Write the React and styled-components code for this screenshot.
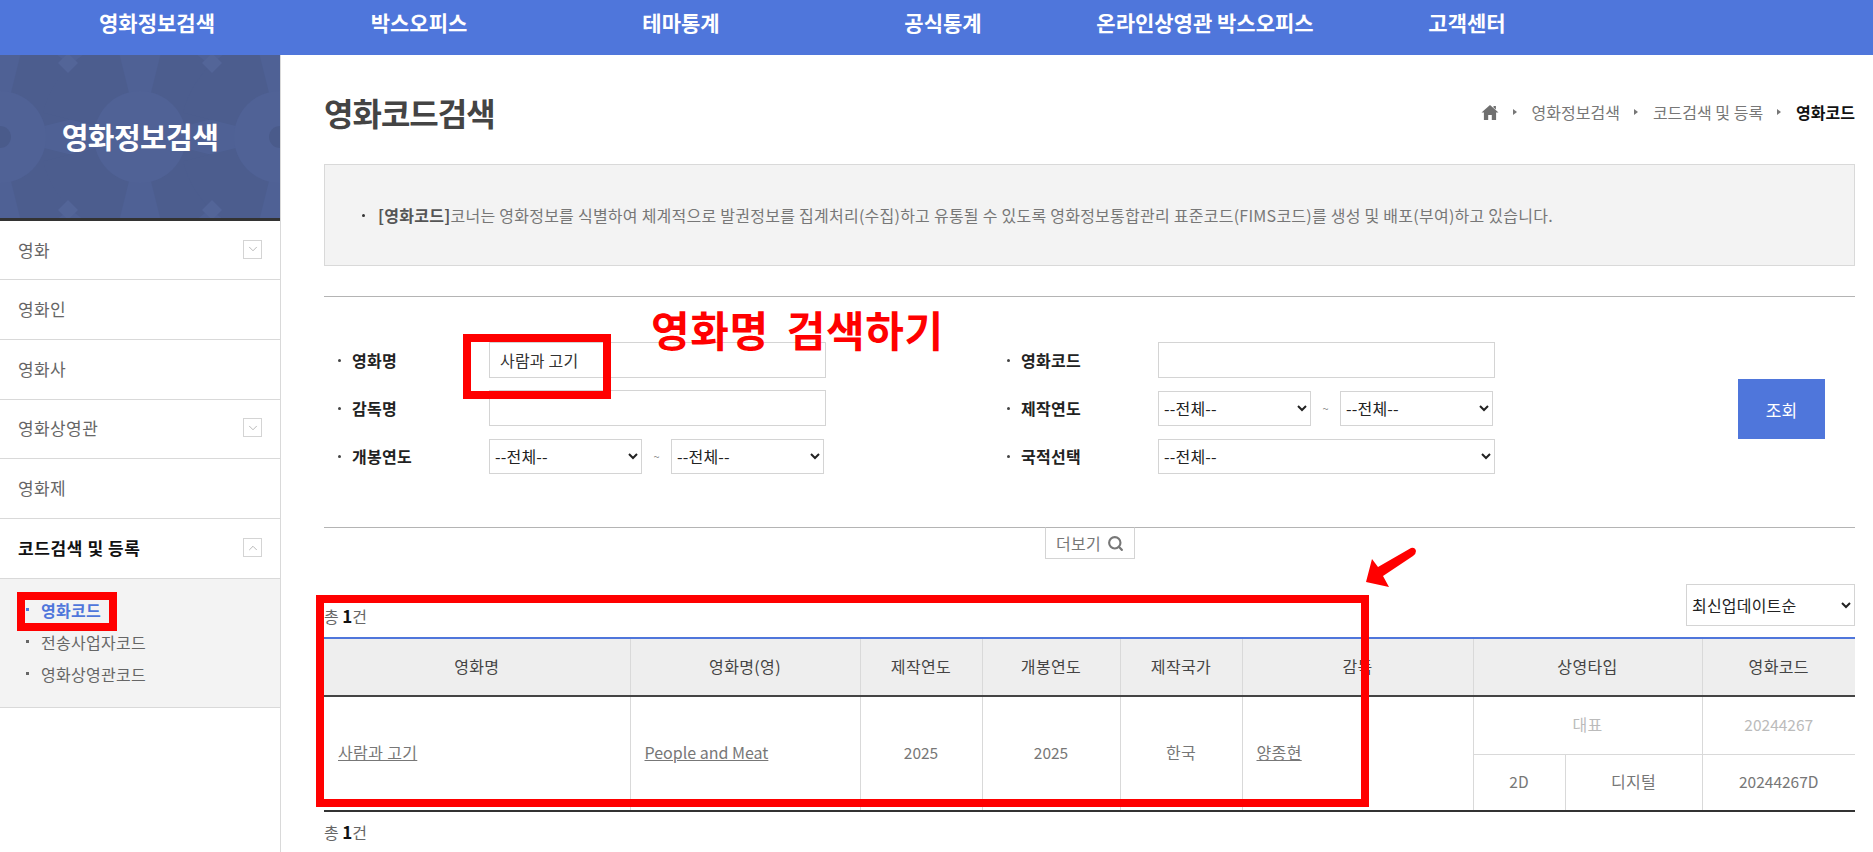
import React from "react";
import styled, { createGlobalStyle } from "styled-components";
import { Search, ChevronDown, ChevronUp } from "lucide-react";

const KR = `"Noto Sans CJK KR", "Noto Sans", sans-serif`;

const Global = createGlobalStyle`
  html, body { margin: 0; padding: 0; background: #fff; }
  body { font-family: ${KR}; color: #555; overflow: hidden; }
  * { box-sizing: border-box; }
`;

const Page = styled.div`
  width: 1873px;
  height: 852px;
  overflow: hidden;
  position: relative;
`;

const TopNav = styled.nav`
  height: 55px;
  background: #4f76db;
  display: flex;
  padding-left: 26px;
`;
const NavItem = styled.a`
  width: 262px;
  height: 45px;
  line-height: 45px;
  text-align: center;
  color: #fff;
  font-size: 21px;
  font-weight: 700;
  white-space: nowrap;
`;

const Body = styled.div`
  display: flex;
  height: 797px;
`;
const Side = styled.aside`
  width: 281px;
  flex: none;
  border-right: 1px solid #d9d9d9;
`;
const Hero = styled.div`
  height: 166px;
  position: relative;
  background: #4f6195;
  border-bottom: 3px solid #333;
  display: flex;
  align-items: center;
  justify-content: center;
  overflow: hidden;
`;
const HeroArt = styled.svg`
  position: absolute;
  inset: 0;
  width: 280px;
  height: 163px;
`;
const HeroTitle = styled.h2`
  position: relative;
  margin: -2px 0 0;
  color: #fff;
  font-size: 29px;
  font-weight: 700;
  letter-spacing: -0.6px;
`;
const MenuRow = styled.div`
  height: ${(p) => p.$h || 59.8}px;
  display: flex;
  align-items: center;
  justify-content: space-between;
  padding: 0 18px 2px;
  border-bottom: 1px solid #d9d9d9;
  color: ${(p) => (p.$on ? "#111" : "#666")};
  font-size: 17px;
  letter-spacing: ${(p) => (p.$on ? 0.6 : 0.4)}px;
  font-weight: ${(p) => (p.$on ? 700 : 400)};
`;
const Toggle = styled.span`
  width: 19px;
  height: 19px;
  border: 1px solid #d4d4d4;
  display: flex;
  align-items: center;
  justify-content: center;
  color: #888;
`;
const SubMenu = styled.ul`
  list-style: none;
  margin: 0;
  padding: 15px 0 0 26px;
  height: 129px;
  background: #f3f3f3;
  border-bottom: 1px solid #d9d9d9;
`;
const SubItem = styled.li`
  height: 32px;
  display: flex;
  align-items: center;
  gap: 12px;
  font-size: 16px;
  letter-spacing: 0.3px;
  color: ${(p) => (p.$on ? "#4f76db" : "#666")};
  font-weight: ${(p) => (p.$on ? 700 : 400)};
  &::before {
    content: "";
    width: 3px;
    height: 3px;
    background: ${(p) => (p.$on ? "#4f76db" : "#666")};
  }
`;

const Main = styled.main`
  width: 1531px;
  margin-left: 43px;
  flex: none;
`;
const TitleRow = styled.div`
  height: 109px;
  display: flex;
  justify-content: space-between;
  align-items: flex-start;
`;
const Title = styled.h1`
  margin: 32px 0 0;
  color: #444;
  font-size: 32px;
  line-height: 50px;
  font-weight: 700;
  letter-spacing: -1px;
`;
const Crumbs = styled.div`
  display: flex;
  align-items: center;
  margin-top: 45px;
  height: 24px;
  font-size: 16px;
  color: #777;
`;
const Crumb = styled.span`
  color: ${(p) => (p.$last ? "#111" : "#777")};
  font-weight: ${(p) => (p.$last ? 700 : 400)};
`;
const CrumbArrow = styled.i`
  width: 0;
  height: 0;
  margin: 0 15px 0 14px;
  border-left: 4px solid #777;
  border-top: 3px solid transparent;
  border-bottom: 3px solid transparent;
`;
const Notice = styled.div`
  height: 102px;
  background: #f3f3f3;
  border: 1px solid #d9d9d9;
  display: flex;
  align-items: center;
  padding-left: 37px;
  font-size: 16px;
  letter-spacing: 0.25px;
  color: #777;
  &::before {
    content: "";
    width: 3px;
    height: 3px;
    border-radius: 50%;
    background: #333;
    margin-right: 13px;
  }
  b { color: #555; font-weight: 700; }
`;
const Filter = styled.form`
  margin-top: 30px;
  height: 232px;
  border-top: 1px solid #b4b4b4;
  border-bottom: 1px solid #b4b4b4;
  padding: 45px 30px 0 14px;
  display: flex;
`;
const FilterCol = styled.div`
  width: ${(p) => p.$w}px;
  flex: none;
  display: flex;
  flex-direction: column;
  gap: 12px;
`;
const Field = styled.div`
  height: 36px;
  display: flex;
  align-items: center;
`;
const Label = styled.label`
  width: 151px;
  flex: none;
  display: flex;
  align-items: center;
  gap: 11px;
  font-size: 16px;
  letter-spacing: 0.3px;
  font-weight: 700;
  color: #222;
  &::before {
    content: "";
    width: 3px;
    height: 3px;
    border-radius: 50%;
    background: #444;
  }
`;
const TextInput = styled.input`
  width: 337px;
  height: 36px;
  border: 1px solid #d4d4d4;
  padding: 0 10px;
  font: 400 16px ${KR};
  letter-spacing: 0.2px;
  color: #333;
  outline: none;
  background: #fff;
`;
const Select = styled.select`
  width: ${(p) => p.$w || 153}px;
  height: ${(p) => p.$h || 35}px;
  border: 1px solid #d4d4d4;
  background: #fff;
  font: 400 16px ${KR};
  letter-spacing: 0.2px;
  color: #222;
  padding: 0 1px;
  border-radius: 0;
`;
const Tilde = styled.span`
  width: 29px;
  text-align: center;
  font-size: 11px;
  color: #888;
`;
const SubmitSlot = styled.div`
  flex: 1;
  display: flex;
  justify-content: flex-end;
  padding-top: 37px;
`;
const SubmitBtn = styled.button`
  width: 87px;
  height: 60px;
  background: #4f76db;
  color: #fff;
  border: 0;
  font: 400 17px ${KR};
`;
const MoreWrap = styled.div`
  display: flex;
  margin-left: 721px;
  height: 56px;
  align-items: flex-start;
`;
const MoreBtn = styled.button`
  width: 90px;
  height: 32px;
  margin-top: -1px;
  border: 1px solid #d4d4d4;
  border-top-color: #b4b4b4;
  background: #fff;
  display: flex;
  align-items: center;
  justify-content: center;
  gap: 6px;
  font: 400 16px ${KR};
  letter-spacing: 0.2px;
  color: #777;
`;
const TableTop = styled.div`
  height: 53px;
  display: flex;
  justify-content: space-between;
  align-items: flex-start;
`;
const Count = styled.div`
  font-size: 16px;
  color: #666;
  line-height: 22px;
  margin-top: ${(p) => p.$mt || 0}px;
  b { color: #111; font-weight: 700; font-size: 17px; }
`;
const Table = styled.table`
  width: 1531px;
  border-collapse: collapse;
  table-layout: fixed;
  border-top: 2px solid #4f76db;
  border-bottom: 2px solid #333;
  font-size: 16px;
  letter-spacing: 0.35px;
  color: #777;
`;
const Th = styled.th`
  height: 58px;
  padding: 0 0 2px;
  background: #eee;
  border-left: 1px solid #d9d9d9;
  border-bottom: 2px solid #444;
  font-weight: 400;
  color: #444;
  &:first-child { border-left: 0; }
`;
const Td = styled.td`
  height: ${(p) => p.$h || 58}px;
  border-left: ${(p) => (p.$first ? "0" : "1px solid #d9d9d9")};
  border-bottom: 1px solid #d9d9d9;
  text-align: ${(p) => (p.$left ? "left" : "center")};
  padding: 0 ${(p) => (p.$left ? 14 : 0)}px ${(p) => (p.rowSpan > 1 ? 4 : 2)}px;
  color: ${(p) => (p.$dim ? "#bbb" : "#777")};
  font-size: ${(p) => (p.$num ? 15.5 : 16)}px;
  letter-spacing: ${(p) => (p.$num ? 0 : 0.35)}px;
  a { color: #777; text-decoration: underline; }
`;
const EnglishLink = styled.a`
  font-size: 16px;
`;
const Annotations = styled.div`
  position: absolute;
  inset: 0;
  pointer-events: none;
`;
const RedBox = styled.div`
  position: absolute;
  left: ${(p) => p.$x}px;
  top: ${(p) => p.$y}px;
  width: ${(p) => p.$w}px;
  height: ${(p) => p.$h}px;
  border: 8px solid #f00;
`;
const RedCaption = styled.div`
  position: absolute;
  left: 651px;
  top: 301px;
  color: #f00;
  font-size: 42px;
  line-height: 56px;
  font-weight: 700;
  white-space: nowrap;
  letter-spacing: 0.6px;
  word-spacing: 8px;
`;
const ArrowArt = styled.svg`
  position: absolute;
  left: 1360px;
  top: 545px;
  width: 60px;
  height: 48px;
`;

const menu = ["영화", "영화인", "영화사", "영화상영관", "영화제"];
const withToggle = { 영화: 1, 영화상영관: 1 };
const navs = ["영화정보검색", "박스오피스", "테마통계", "공식통계", "온라인상영관 박스오피스", "고객센터"];

const sector = (cx, cy, r, mid, half) => {
  const rad = (d) => ((d - 90) * Math.PI) / 180;
  const p = (d) => `${cx + r * Math.cos(rad(d))} ${cy + r * Math.sin(rad(d))}`;
  return `M${cx} ${cy} L${p(mid - half)} A${r} ${r} 0 0 1 ${p(mid + half)} Z`;
};

const HeroPattern = () => {
  const centers = [0, 140, 280];
  const diamonds = [[68, 8], [212, 8], [68, 155], [212, 155]];
  return (
    <HeroArt viewBox="0 0 280 163">
      {centers.map((cx) =>
        [45, 135, 225, 315].map((a) => (
          <path key={cx + "-" + a} d={sector(cx, 82, 100, a, 31)} fill="#4c5d8e" />
        ))
      )}
      {diamonds.map(([x, y]) => (
        <path key={x + "-" + y} d={`M${x} ${y - 10} L${x + 10} ${y} L${x} ${y + 10} L${x - 10} ${y} Z`} fill="#536598" />
      ))}
      {centers.map((cx) => (
        <circle key={cx} cx={cx} cy="82" r="46" fill="#506296" />
      ))}
      <circle cx="0" cy="82" r="11" fill="#4a5b8b" />
      <circle cx="280" cy="82" r="11" fill="#4a5b8b" />
    </HeroArt>
  );
};

const Home = () => (
  <svg width="18" height="15" viewBox="0 0 17 15">
    <path d="M8.5 0 L17 7.6 H14.6 V15 H10.3 V10 H6.7 V15 H2.4 V7.6 H0 Z M12 1 H14.4 V4.4 L12 2.4 Z" fill="#6f6f6f" />
  </svg>
);

export default function App() {
  return (
    <Page>
      <Global />
      <TopNav>
        {navs.map((n) => (
          <NavItem key={n}>{n}</NavItem>
        ))}
      </TopNav>
      <Body>
        <Side>
          <Hero>
            <HeroPattern />
            <HeroTitle>영화정보검색</HeroTitle>
          </Hero>
          {menu.map((m, i) => (
            <MenuRow key={m} $h={i === 0 ? 59 : undefined}>
              {m}
              {withToggle[m] && (
                <Toggle>
                  <ChevronDown size={14} strokeWidth={1} />
                </Toggle>
              )}
            </MenuRow>
          ))}
          <MenuRow $on>
            코드검색 및 등록
            <Toggle>
              <ChevronUp size={14} strokeWidth={1} />
            </Toggle>
          </MenuRow>
          <SubMenu>
            <SubItem $on>영화코드</SubItem>
            <SubItem>전송사업자코드</SubItem>
            <SubItem>영화상영관코드</SubItem>
          </SubMenu>
        </Side>
        <Main>
          <TitleRow>
            <Title>영화코드검색</Title>
            <Crumbs>
              <Home />
              <CrumbArrow />
              <Crumb>영화정보검색</Crumb>
              <CrumbArrow />
              <Crumb>코드검색 및 등록</Crumb>
              <CrumbArrow />
              <Crumb $last>영화코드</Crumb>
            </Crumbs>
          </TitleRow>
          <Notice>
            <span>
              <b>[영화코드]</b>코너는 영화정보를 식별하여 체계적으로 발권정보를 집계처리(수집)하고 유통될 수 있도록 영화정보통합관리 표준코드(FIMS코드)를 생성 및 배포(부여)하고 있습니다.
            </span>
          </Notice>
          <Filter>
            <FilterCol $w={669}>
              <Field>
                <Label>영화명</Label>
                <TextInput defaultValue="사람과 고기" />
              </Field>
              <Field>
                <Label>감독명</Label>
                <TextInput />
              </Field>
              <Field>
                <Label>개봉연도</Label>
                <Select><option>--전체--</option></Select>
                <Tilde>~</Tilde>
                <Select><option>--전체--</option></Select>
              </Field>
            </FilterCol>
            <FilterCol $w={500}>
              <Field>
                <Label>영화코드</Label>
                <TextInput />
              </Field>
              <Field>
                <Label>제작연도</Label>
                <Select><option>--전체--</option></Select>
                <Tilde>~</Tilde>
                <Select><option>--전체--</option></Select>
              </Field>
              <Field>
                <Label>국적선택</Label>
                <Select $w={337}><option>--전체--</option></Select>
              </Field>
            </FilterCol>
            <SubmitSlot>
              <SubmitBtn type="button">조회</SubmitBtn>
            </SubmitSlot>
          </Filter>
          <MoreWrap>
            <MoreBtn type="button">
              더보기
              <Search size={17} strokeWidth={3} color="#777" />
            </MoreBtn>
          </MoreWrap>
          <TableTop>
            <Count $mt={21}>총 <b>1</b>건</Count>
            <Select $w={169} $h={42}><option>최신업데이트순</option></Select>
          </TableTop>
          <Table>
            <colgroup>
              {[306, 230, 122, 138, 122, 231, 92, 137, 153].map((w, i) => (
                <col key={i} style={{ width: w }} />
              ))}
            </colgroup>
            <thead>
              <tr>
                <Th>영화명</Th>
                <Th>영화명(영)</Th>
                <Th>제작연도</Th>
                <Th>개봉연도</Th>
                <Th>제작국가</Th>
                <Th>감독</Th>
                <Th colSpan={2}>상영타입</Th>
                <Th>영화코드</Th>
              </tr>
            </thead>
            <tbody>
              <tr>
                <Td rowSpan={2} $left $first><a>사람과 고기</a></Td>
                <Td rowSpan={2} $left $num><EnglishLink>People and Meat</EnglishLink></Td>
                <Td rowSpan={2} $num>2025</Td>
                <Td rowSpan={2} $num>2025</Td>
                <Td rowSpan={2}>한국</Td>
                <Td rowSpan={2} $left><a>양종현</a></Td>
                <Td colSpan={2} $dim $h={58}>대표</Td>
                <Td $dim $num>20244267</Td>
              </tr>
              <tr>
                <Td $num $h={57}>2D</Td>
                <Td $h={57}>디지털</Td>
                <Td $num $h={57}>20244267D</Td>
              </tr>
            </tbody>
          </Table>
          <Count $mt={9}>총 <b>1</b>건</Count>
        </Main>
      </Body>
      <Annotations>
        <RedBox $x={17} $y={592} $w={100} $h={39} />
        <RedBox $x={463} $y={334} $w={148} $h={65} />
        <RedBox $x={316} $y={595} $w={1053} $h={212} />
        <RedCaption>영화명 검색하기</RedCaption>
        <ArrowArt viewBox="0 0 60 48">
          <path d="M6 37 L12 14 L18 22 L51 3 Q55 2 56 6 Q56 9 53 11 L23 31 L29 42 Z" fill="#f00" />
        </ArrowArt>
      </Annotations>
    </Page>
  );
}
